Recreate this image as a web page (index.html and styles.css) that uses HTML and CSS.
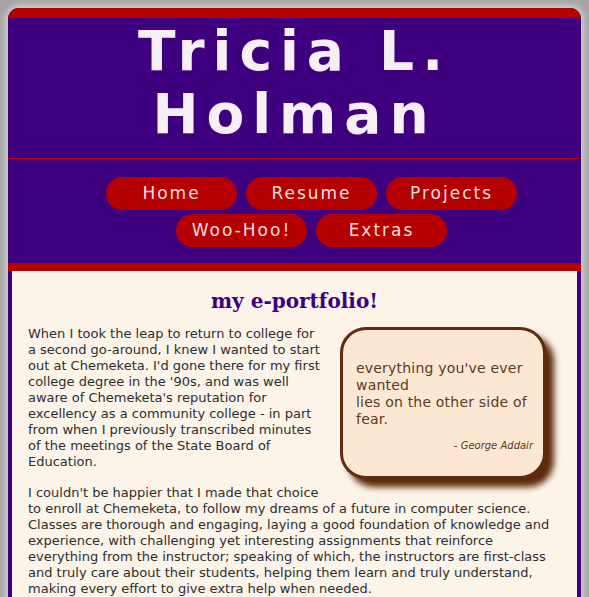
FILE: index.html
```html
<!DOCTYPE html>
<html lang="en">
<head>
<meta charset="utf-8">
<title>Tricia L. Holman</title>
<link rel="stylesheet" href="styles.css">
</head>
<body>
<div class="page">
  <header class="masthead">
    <h1 class="name">Tricia L.<br>Holman</h1>
    <nav class="nav">
      <ul class="nav-list">
        <li><a class="pill" href="#">Home</a></li>
        <li><a class="pill" href="#">Resume</a></li>
        <li><a class="pill" href="#">Projects</a></li>
        <li><a class="pill" href="#">Woo-Hoo!</a></li>
        <li><a class="pill" href="#">Extras</a></li>
      </ul>
    </nav>
  </header>
  <main class="content">
    <h2 class="title">my e-portfolio!</h2>
    <aside class="quote">
      <p class="quote-text">everything you've ever wanted<br>lies on the other side of fear.</p>
      <p class="quote-by">- George Addair</p>
    </aside>
    <p class="text">When I took the leap to return to college for a second go-around, I knew I wanted to start out at Chemeketa. I'd gone there for my first college degree in the '90s, and was well aware of Chemeketa's reputation for excellency as a community college - in part from when I previously transcribed minutes of the meetings of the State Board of Education.</p>
    <p class="text">I couldn't be happier that I made that choice<br>to enroll at Chemeketa, to follow my dreams of a future in computer science. Classes are thorough and engaging, laying a good foundation of knowledge and experience, with challenging yet interesting assignments that reinforce everything from the instructor; speaking of which, the instructors are first-class and truly care about their students, helping them learn and truly understand, making every effort to give extra help when needed.</p>
  </main>
</div>
</body>
</html>
```

FILE: styles.css
```css
html, body {
  margin: 0;
  padding: 0;
}
body {
  background: #a6a6a6;
  padding: 8px 8px 0 8px;
}
.page {
  background: #3f0080;
  border-radius: 11px 11px 0 0;
  box-shadow: 0 0 6px 2px #d8d8d8;
}
.masthead {
  border-top: 10px solid #b50000;
  border-radius: 11px 11px 0 0;
}
.name {
  margin: 0;
  padding: 2px 0 12px;
  text-align: center;
  font-family: "DejaVu Sans", sans-serif;
  font-weight: bold;
  font-size: 55px;
  line-height: 63px;
  letter-spacing: 8px;
  color: #f4f0f6;
  border-bottom: 1px solid #b50000;
}
.nav {
  border-bottom: 8px solid #b50000;
  padding: 18px 0 16px;
}
.nav-list {
  list-style: none;
  display: flex;
  flex-wrap: wrap;
  justify-content: center;
  gap: 4px 9px;
  max-width: 440px;
  margin: 0 auto;
  padding: 0 0 0 34px;
}
.pill {
  display: block;
  width: 131px;
  height: 33px;
  line-height: 33px;
  text-align: center;
  border-radius: 17px;
  background: #b50000;
  color: #f7dede;
  text-decoration: none;
  font-family: "DejaVu Sans", sans-serif;
  font-size: 17px;
  letter-spacing: 2px;
}
.content {
  background: #fcf3e9;
  margin: 0 4px;
  padding: 1px 16px 2px;
  color: #2e2e2e;
  font-family: "DejaVu Sans", sans-serif;
  font-size: 13px;
  line-height: 16px;
}
.title {
  margin: 16px 0 12px;
  text-align: center;
  font-family: "DejaVu Serif", serif;
  font-weight: bold;
  font-size: 20px;
  line-height: 26px;
  color: #3d0080;
}
.quote {
  float: right;
  width: 177px;
  margin: 1px 15px 10px 20px;
  padding: 30px 10px 24px 13px;
  background: #fce8d2;
  border: 3px solid #5e2c0e;
  border-radius: 26px;
  box-shadow: 8px 8px 6px #5a2a0a;
  color: #5a3a22;
}
.quote-text {
  margin: 0;
  font-size: 14px;
  line-height: 17px;
  letter-spacing: 0.2px;
}
.quote-by {
  margin: 12px 0 0;
  text-align: right;
  font-style: italic;
  font-size: 10px;
  line-height: 12px;
}
.text {
  margin: 0 0 15px;
}
```
